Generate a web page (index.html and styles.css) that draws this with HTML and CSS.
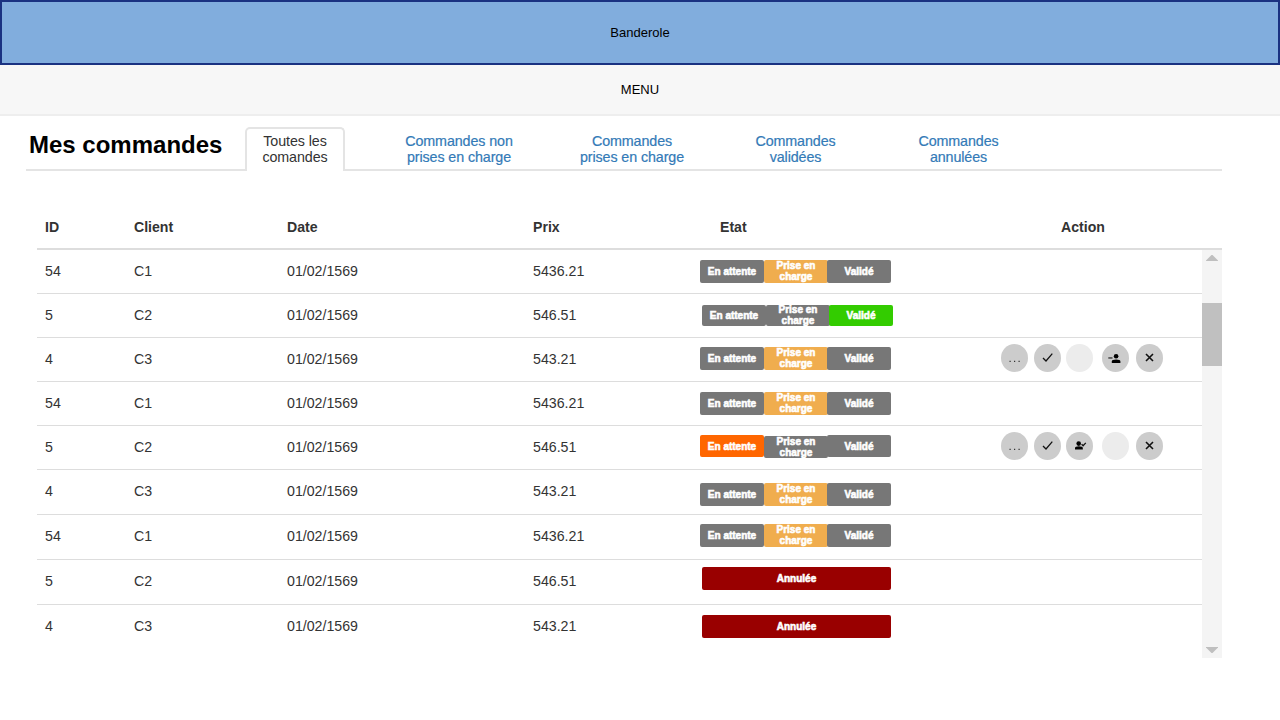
FILE: index.html
```html
<!DOCTYPE html>
<html lang="fr">
<head>
<meta charset="utf-8">
<title>Mes commandes</title>
<link rel="stylesheet" href="styles.css">
</head>
<body>
<header class="banner">Banderole</header>
<nav class="menu">MENU</nav>
<main class="page">
  <div class="tabbar">
    <h1 class="title">Mes commandes</h1>
    <a class="tab active">Toutes les<br>comandes</a>
    <a class="tab non-prises">Commandes non<br>prises en charge</a>
    <a class="tab prises">Commandes<br>prises en charge</a>
    <a class="tab validees">Commandes<br>validées</a>
    <a class="tab annulees">Commandes<br>annulées</a>
  </div>
  <section class="orders">
    <div class="row head"><span>ID</span><span>Client</span><span>Date</span><span>Prix</span><span class="etat">Etat</span><span class="action">Action</span></div>
    <div class="body">
      <div class="rows" id="rows"></div>
      <div class="scrollbar">
        <svg class="arrow" viewBox="0 0 12 6"><path d="M0 6V5.5L5.5 0H6.5L12 5.5V6Z"/></svg>
        <div class="thumb"></div>
        <svg class="arrow down" viewBox="0 0 12 6"><path d="M0 0V.5L5.5 6H6.5L12 .5V0Z"/></svg>
      </div>
    </div>
  </section>
</main>
<script src="app.js"></script>
</body>
</html>
```
FILE: styles.css
```css
* { box-sizing: border-box; }
body {
  margin: 0;
  height: 720px;
  overflow: hidden;
  background: #fff;
  color: #333;
  font-family: "Liberation Sans", Arial, sans-serif;
  font-size: 14px;
}
.banner {
  height: 65px;
  border: 2px solid #1a3281;
  background: #81addd;
  color: #000;
  font-size: 13px;
  line-height: 61px;
  text-align: center;
}
.menu {
  height: 51px;
  border-bottom: 2px solid #eee;
  background: #f7f7f7;
  color: #000;
  font-size: 13px;
  line-height: 49px;
  text-align: center;
}
.page { padding: 11px 58px 0 26px; }
.tabbar {
  display: flex;
  height: 44px;
  background: linear-gradient(#e4e4e4, #e4e4e4) 0 100% / 100% 2px no-repeat;
}
.title {
  width: 219px;
  margin: 0;
  padding: 3px 0 0 3px;
  color: #000;
  font-size: 24px;
  line-height: 30px;
  white-space: nowrap;
}
.tab {
  padding-top: 6px;
  color: #337ab7;
  font-size: 14.3px;
  letter-spacing: -.1px;
  line-height: 16px;
  text-align: center;
  white-space: nowrap;
  -webkit-text-stroke: .2px currentColor;
}
.tab.active {
  width: 100px;
  padding-top: 4px;
  border: 2px solid #e4e4e4;
  border-bottom: 0;
  border-radius: 5px 5px 0 0;
  background: #fff;
  color: #333;
  -webkit-text-stroke: 0;
}
.non-prises { width: 140px; margin-left: 44px; }
.prises { width: 140px; margin-left: 33px; }
.validees { width: 120px; margin-left: 33.5px; }
.annulees { width: 120px; margin-left: 43px; }
.orders { padding: 34px 0 0 11px; }
.row {
  display: grid;
  grid-template-columns: 89px 153px 246px 167px 301px 1fr;
  height: 44px;
  padding-left: 8px;
  border-bottom: 1px solid #ddd;
  font-size: 14.2px;
  line-height: 42px;
}
.row.tall { height: 45px; }
.row.last { height: 53px; border-bottom: 0; }
.head {
  height: 45px;
  border-bottom: 2px solid #ddd;
  font-size: 14.1px;
  font-weight: bold;
  line-height: 44px;
}
.etat { padding-left: 20px; }
.action { padding-left: 60px; }
.body { display: flex; }
.rows { flex: 1; }
.scrollbar {
  display: flex;
  flex-direction: column;
  align-items: center;
  width: 20px;
  height: 408px;
  padding: 5px 0;
  background: #f4f4f4;
}
.arrow { width: 12px; height: 6px; fill: #bfbfbf; }
.thumb { width: 20px; height: 63px; margin-top: 42px; background: #c0c0c0; }
.down { margin-top: auto; }
.states {
  display: flex;
  align-items: flex-start;
  color: #fff;
  font-size: 10px;
  font-weight: bold;
  line-height: 11px;
  -webkit-text-stroke: .6px #fff;
}
.badge {
  display: flex;
  align-items: center;
  justify-content: center;
  width: 64px;
  height: 23px;
  border-radius: 2px;
  background: #777;
  text-align: center;
  white-space: nowrap;
}
.badge.offset { padding-bottom: 2px; }
.badge.final { margin-left: -1px; }
.current { background: #f0ad4e; }
.valid { background: #3c0; }
.waiting { background: #f60; }
.canceled { width: 189px; background: #900; }
.shift { padding-left: 2px; }
.short .badge { height: 21px; }
.mid .badge { height: 22px; }
.mid .badge.offset { margin-top: 1px; padding-bottom: 1px; }
.top7 { padding-top: 7px; }
.top9 { padding-top: 9px; }
.top10 { padding-top: 10px; }
.top11 { padding-top: 11px; }
.top13 { padding-top: 13px; }
.actions { display: flex; padding-top: 6px; }
.round {
  display: flex;
  align-items: center;
  justify-content: center;
  width: 27px;
  height: 28px;
  margin-right: 6px;
  border-radius: 50%;
  background: #ccc;
}
.round svg { width: 27px; height: 28px; }
.round.third { margin: 0 9px 0 -1px; }
.round.fourth { margin-right: 7px; }
.round.off { background: #ececec; }
.line { fill: none; stroke: #111; stroke-width: 1.3; }
.cross { stroke-width: 1.6; }
```
FILE: app.js
```js
const icons = {
  dots: '<path d="M8.5 16.7h1.2v1.2h-1.2zM13 16.7h1.2v1.2h-1.2zM17.5 16.7h1.2v1.2h-1.2z" fill="#333"/>',
  check: '<path class="line" d="M9 14L12 17L18.3 9.7"/>',
  userCheck: '<circle cx="12.7" cy="11.6" r="2.3"/><path d="M9 17.5v-1.4q0-1.8 3.9-1.8t3.9 1.8v1.4z"/><path class="line" d="M15.6 12.1l1.5 1.6 2.7-2.8"/>',
  userMinus: '<circle cx="14.1" cy="12.2" r="2.3"/><path d="M9.8 19v-1.6q0-1.8 4.3-1.8t4.3 1.8V19z"/><path d="M6.3 13.1h4.2v1.7H6.3z" fill="#555"/>',
  cross: '<path class="line cross" d="M10 10l7 7M17 10l-7 7"/>'
};
const round = (name, cls = '') =>
  `<div class="round ${cls} ${name ? '' : 'off'}">${name ? `<svg viewBox="0 0 27 28">${icons[name]}</svg>` : ''}</div>`;
const actions = (third, fourth) =>
  round('dots') + round('check') + round(third, 'third') + round(fourth, 'fourth') + round('cross');
const badges = (a, b, c) =>
  `<div class="badge ${a}">En attente</div><div class="badge offset ${b}">Prise en<br>charge</div><div class="badge final ${c}">Validé</div>`;
const taken = badges('', 'current', '');
const canceled = '<div class="badge canceled">Annulée</div>';

const orders = [
  ['54', 'C1', '5436.21', 'top10', taken, '', ''],
  ['5', 'C2', '546.51', 'top11 shift short', badges('', '', 'valid'), '', ''],
  ['4', 'C3', '543.21', 'top9', taken, actions('', 'userMinus'), ''],
  ['54', 'C1', '5436.21', 'top10', taken, '', ''],
  ['5', 'C2', '546.51', 'top9 mid', badges('waiting', '', ''), actions('userCheck', ''), ''],
  ['4', 'C3', '543.21', 'top13', taken, '', 'tall'],
  ['54', 'C1', '5436.21', 'top9', taken, '', 'tall'],
  ['5', 'C2', '546.51', 'top7 shift', canceled, '', 'tall'],
  ['4', 'C3', '543.21', 'top10 shift', canceled, '', 'last']
];
document.getElementById('rows').innerHTML = orders.map(([id, client, price, pos, state, act, size]) =>
  `<div class="row ${size}"><span>${id}</span><span>${client}</span><span>01/02/1569</span><span>${price}</span><div class="states ${pos}">${state}</div><div class="actions">${act}</div></div>`
).join('');
```
